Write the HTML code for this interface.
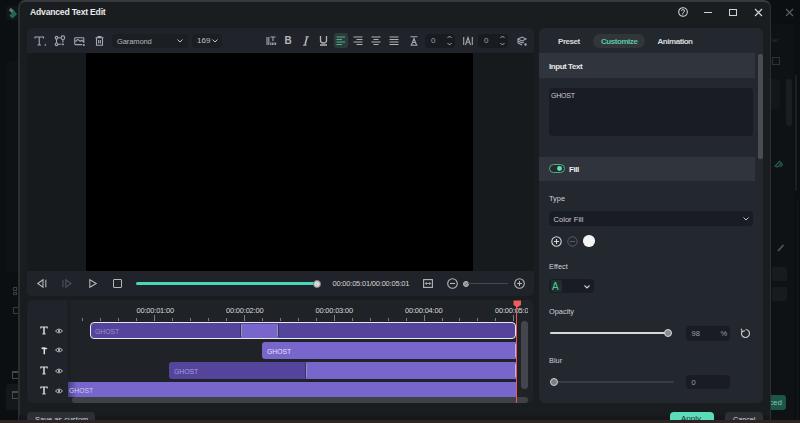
<!DOCTYPE html>
<html><head><meta charset="utf-8">
<style>
*{margin:0;padding:0;box-sizing:border-box}
html,body{width:800px;height:423px;overflow:hidden;background:#0c0f12;font-family:"Liberation Sans",sans-serif;color:#e8e8e8}
.a{position:absolute}
svg{overflow:visible}
#dlg{left:18px;top:0px;width:753px;height:431px;background:#1a1d20;border:1px solid #2c2f34;border-left:2px solid #2b2e32;border-top:2px solid #363a3e;border-radius:7px 7px 0 0}
.title{left:30px;top:7px;font-size:8.6px;font-weight:bold;letter-spacing:-0.2px;color:#eaeaea;white-space:nowrap}
.tb{left:27px;top:28px;width:507px;height:25px;background:#202329;border-radius:5px 5px 0 0}
.prev{left:27px;top:53px;width:507px;height:218px;background:#171a1d}
.vid{left:86px;top:53px;width:387px;height:217.5px;background:#000}
.pb{left:27px;top:270.5px;width:507px;height:25.5px;background:#202329;border-radius:0 0 5px 5px}
.tl{left:27px;top:300px;width:506px;height:102.5px;background:#1f2328;border-radius:5px}
.rp{left:539px;top:28px;width:224px;height:374.5px;background:#23272e;border-radius:6px}
.band{background:#30343c}
.lbl{font-size:8px;color:#d8d8d8;white-space:nowrap}
.bold{font-weight:bold;letter-spacing:-0.45px}
.inp{background:#181b20;border-radius:4px}
.clip{border-radius:3px}
.dk{background:#55449b}
.lt{background:#7866cc}
.ghost{font-size:8px;color:#a89ede;white-space:nowrap;transform:scaleX(0.85);transform-origin:0 0;margin-top:0.7px}
.btm{left:0;top:420px;width:800px;height:3px;background:#2c2622}
.ic{stroke:#a4a8ae;fill:none;stroke-width:1.1}
.tick{position:absolute;width:1px;background:#7a7d82}
.rl{font-size:7.5px;color:#d6d8db;white-space:nowrap;letter-spacing:-0.2px}
</style></head><body>
<!-- background app -->
<div class="a" style="left:771px;top:24px;width:23px;height:396px;background:#0f1215"></div>
<div class="a" style="left:794.5px;top:75px;width:2.5px;height:116px;background:#1c2024;border-radius:1px"></div>
<div class="a" style="left:766px;top:79px;width:14px;height:30px;background:#14171a;border-radius:3px"></div>
<div class="a" style="left:786px;top:79px;width:5.5px;height:47px;background:#1a1e21;border-radius:3px"></div>
<div class="a" style="left:772px;top:57px;width:8px;height:8px;border:1px solid #2e3236"></div>
<div class="a" style="left:772px;top:37px;font:6px 'Liberation Sans';color:#2e3236">ler</div>
<svg class="a" style="left:773.5px;top:158.5px" width="12" height="9" viewBox="0 0 12 9"><path d="M1.2 7 L5.5 2.5 L7.5 4.3 L3.5 8 Z M6 8 L9 5" stroke="#26574b" fill="none" stroke-width="1.3"/></svg>
<svg class="a" style="left:776.5px;top:242.5px" width="8" height="9"><path d="M1 8 L6.5 2" stroke="#55595d" stroke-width="1.6"/></svg>
<div class="a" style="left:772px;top:267px;width:15px;height:14px;background:#181b1e;border-radius:2px"></div>
<div class="a" style="left:772px;top:287px;width:15px;height:14px;background:#181b1e;border-radius:2px"></div>
<div class="a" style="left:797px;top:200px;width:1px;height:220px;background:#171a1d"></div>

<div class="a" style="left:6px;top:61px;width:14px;height:211px;background:#0f1215;border-radius:3px"></div>
<div class="a" style="left:6px;top:384px;width:14px;height:26px;background:#15181b;border-radius:3px"></div>
<div class="a" style="left:13px;top:287px;width:4px;height:3.5px;border:1px solid #3b3f43"></div><div class="a" style="left:13px;top:291.5px;width:4px;height:3.5px;border:1px solid #3b3f43"></div>
<div class="a" style="left:12.5px;top:307px;width:6px;height:7px;border:1px solid #373b3f"></div>
<div class="a" style="left:12px;top:371px;width:7px;height:8px;border:1.2px solid #45494d;border-top-width:2.5px"></div>
<div class="a" style="left:12px;top:391px;width:7px;height:8px;border:1.2px solid #45494d;border-top-width:2.5px"></div>
<div class="a" style="left:6px;top:6px;width:12px;height:14px;background:#0e1819;border-radius:2px"></div><svg class="a" style="left:6px;top:6px" width="12" height="14" viewBox="0 0 12 14"><path d="M4.5 1.8 L8 4.6 L6 7 L3 4.4 Z" fill="#647a74"/><path d="M6 7 L8 4.6 L11 8.2 L6.5 12.5 L3.2 9.8 Z" fill="#266554"/></svg>
<svg class="a" style="left:786px;top:9px" width="8" height="7"><path d="M0 0 L7 7 M7 0 L0 7" stroke="#5d6166" stroke-width="1.1"/></svg>
<div class="a" style="left:760px;top:395px;width:26px;height:15px;background:#1d5646;border-radius:3px"></div><div class="a" style="left:769px;top:398px;font:8px 'Liberation Sans';color:#7fc9b0">ced</div>
<!-- dialog -->
<div id="dlg" class="a"></div>
<div class="a title">Advanced Text Edit</div>
<!-- window controls -->
<svg class="a" style="left:677.7px;top:7.1px" width="10" height="10" viewBox="0 0 10 10"><circle cx="5" cy="5" r="4.3" stroke="#cfd1d4" fill="none" stroke-width="1.1"/><path d="M3.4 3.9 Q3.6 2.6 5.1 2.6 Q6.6 2.7 6.5 4 Q6.3 5 5.2 5.6 Q4.7 6 4.6 7.6" stroke="#cfd1d4" fill="none" stroke-width="1"/></svg>
<div class="a" style="left:704px;top:12px;width:8px;height:1.2px;background:#d0d2d5"></div>
<div class="a" style="left:729px;top:9px;width:8px;height:7px;border:1.1px solid #d0d2d5"></div>
<svg class="a" style="left:755px;top:9px" width="7" height="7"><path d="M0 0 L7 7 M7 0 L0 7" stroke="#d0d2d5" stroke-width="1.2"/></svg>

<!-- toolbar -->
<div class="a tb"></div>
<svg class="a" style="left:34px;top:36px" width="13" height="10" viewBox="0 0 13 10"><path class="ic" d="M1 2.5 V1 H9.5 V2.5 M5.25 1 V9 M3.5 9 H7"/><path d="M10 9.5 L12 7.5 L12 9.5 Z" fill="#a4a8ae"/></svg>
<svg class="a" style="left:54px;top:35px" width="11" height="11" viewBox="0 0 11 11"><path class="ic" d="M3.8 2.7 H6.8 M2.5 4 V8 M3.8 9.3 H7.5 M8.9 5 V7.5"/><circle class="ic" cx="2.5" cy="2.7" r="1.3"/><circle class="ic" cx="8.9" cy="2.7" r="1.8"/><circle class="ic" cx="2.5" cy="9.3" r="1.3"/><rect x="8.1" y="8.5" width="1.7" height="1.7" fill="#a4a8ae"/></svg>
<svg class="a" style="left:74px;top:37px" width="12" height="10" viewBox="0 0 12 10"><path class="ic" d="M9.8 6 V1.5 Q9.8 0.7 9 0.7 H1.5 Q0.7 0.7 0.7 1.5 V6.8 Q0.7 7.6 1.5 7.6 H8.2 M1.5 4.5 L3.8 2.4 L6.2 4.3 L8 3.3 L9.5 4.8"/><circle cx="9.8" cy="8" r="1.1" fill="#a4a8ae"/></svg>
<svg class="a" style="left:95px;top:36px" width="9" height="10" viewBox="0 0 9 10"><path class="ic" d="M0.5 1.8 H8.5 M3 1.8 V0.6 H6 V1.8 M1.5 1.8 V9.2 H7.5 V1.8 M3.6 4 V7.5 M5.4 4 V7.5"/></svg>

<div class="a inp" style="left:112px;top:34px;width:76px;height:14px;background:#1b1e23"></div>
<div class="a lbl" style="left:117px;top:36.5px;color:#b4b7bc;font-size:7.5px;letter-spacing:-0.1px">Garamond</div>
<svg class="a" style="left:177px;top:39px" width="6" height="4"><path d="M0.5 0.5 L3 3 L5.5 0.5" stroke="#c2c4c8" fill="none" stroke-width="1"/></svg>
<div class="a inp" style="left:192px;top:34px;width:30px;height:14px;background:#1b1e23"></div>
<div class="a lbl" style="left:197px;top:36px;color:#c2c4c8;font-size:8px">169</div>
<svg class="a" style="left:212px;top:39px" width="6" height="4"><path d="M0.5 0.5 L3 3 L5.5 0.5" stroke="#c2c4c8" fill="none" stroke-width="1"/></svg>

<!-- text format icons -->
<svg class="a" style="left:266px;top:36px" width="11" height="10" viewBox="0 0 11 10"><path class="ic" d="M1 1 V9 M2.8 1 V9 M4.5 1 H9.5 M7 1 V5 M4.8 6.5 V9 M6.4 6.5 V9 M8 6.5 V9 M9.6 6.5 V9"/></svg>
<div class="a" style="left:284.5px;top:35px;font:bold 10px 'Liberation Sans';color:#b4b7bc">B</div>
<svg class="a" style="left:302px;top:36px" width="8" height="10"><path d="M5 1 L3 9" stroke="#b4b7bc" stroke-width="1.5"/><path d="M3.5 0.8 H7 M1 9.2 H4.5" stroke="#b4b7bc" stroke-width="1"/></svg>
<svg class="a" style="left:319px;top:35px" width="9" height="11"><path d="M1.5 1 V5.5 Q1.5 8 4.5 8 Q7.5 8 7.5 5.5 V1 M1 10 H8" stroke="#b4b7bc" fill="none" stroke-width="1.3"/></svg>
<div class="a" style="left:334px;top:33px;width:14px;height:15px;background:#2d3b39;border-radius:3px"></div>
<svg class="a" style="left:336px;top:36px" width="10" height="10"><path d="M0.5 1 H9 M0.5 3.5 H6 M0.5 6 H9 M0.5 8.5 H6" stroke="#4fae91" stroke-width="1.2"/></svg>
<svg class="a" style="left:353px;top:36px" width="10" height="10"><path d="M0.5 1 H9.5 M3.5 3.5 H9.5 M0.5 6 H9.5 M3.5 8.5 H9.5" stroke="#aeb1b6" stroke-width="1.2"/></svg>
<svg class="a" style="left:371px;top:36px" width="10" height="10"><path d="M0.5 1 H9.5 M2.5 3.5 H7.5 M0.5 6 H9.5 M2.5 8.5 H7.5" stroke="#aeb1b6" stroke-width="1.2"/></svg>
<svg class="a" style="left:389px;top:36px" width="10" height="10"><path d="M0.5 1 H9.5 M0.5 3.5 H9.5 M0.5 6 H9.5 M0.5 8.5 H9.5" stroke="#aeb1b6" stroke-width="1.2"/></svg>
<svg class="a" style="left:410px;top:36px" width="8" height="10"><path class="ic" d="M0.5 0.8 H7.5 M0.5 9.2 H7.5 M1.5 9 L4 2.5 L6.5 9 M2.5 6.5 H5.5"/></svg>
<div class="a inp" style="left:424.5px;top:33.5px;width:30.5px;height:14px"></div>
<div class="a lbl" style="left:431px;top:36px;color:#a0a3a8">0</div>
<svg class="a" style="left:447px;top:35px" width="5" height="11"><path d="M0.5 3 L2.5 1 L4.5 3 M0.5 8 L2.5 10 L4.5 8" stroke="#a4a8ae" fill="none" stroke-width="1"/></svg>
<svg class="a" style="left:462.5px;top:36px" width="10" height="10"><path class="ic" d="M0.7 1 V9 M9.3 1 V9 M2.5 9 L5 1.5 L7.5 9 M3.5 6.3 H6.5"/></svg>
<div class="a inp" style="left:477.5px;top:33.5px;width:30.5px;height:14px"></div>
<div class="a lbl" style="left:484px;top:36px;color:#a0a3a8">0</div>
<svg class="a" style="left:500px;top:35px" width="5" height="11"><path d="M0.5 3 L2.5 1 L4.5 3 M0.5 8 L2.5 10 L4.5 8" stroke="#a4a8ae" fill="none" stroke-width="1"/></svg>
<svg class="a" style="left:517px;top:36px" width="10" height="10"><path class="ic" d="M1 3 L5 1 L9 3 L5 5 Z M1 5 L5 7 L7 6 M1 3 V7 L5 9"/><circle cx="8.5" cy="8.5" r="1.2" fill="#a4a8ae"/></svg>

<div class="a prev"></div>
<div class="a vid"></div>

<!-- playback bar -->
<div class="a pb"></div>
<svg class="a" style="left:37px;top:279px" width="10" height="9"><path d="M6 0.8 L0.8 4.5 L6 8.2 Z M8.8 0.8 V8.2" stroke="#b4b7bc" fill="none" stroke-width="1.1"/></svg>
<svg class="a" style="left:62px;top:279px" width="10" height="9"><path d="M3.8 0.8 L9 4.5 L3.8 8.2 Z M1 0.8 V8.2" stroke="#4d5157" fill="none" stroke-width="1.1"/></svg>
<svg class="a" style="left:89px;top:279px" width="8" height="9"><path d="M0.8 0.8 L7.2 4.5 L0.8 8.2 Z" stroke="#b4b7bc" fill="none" stroke-width="1.1"/></svg>
<div class="a" style="left:113px;top:279px;width:9px;height:9px;border:1.1px solid #b4b7bc;border-radius:1px"></div>
<div class="a" style="left:136px;top:282px;width:181px;height:2.6px;background:#44d9b9;border-radius:2px"></div>
<div class="a" style="left:312.5px;top:279.5px;width:8px;height:8px;background:#d4d6d9;border:1.6px solid #7d8085;border-radius:50%"></div>
<div class="a rl" style="left:332.5px;top:279px;color:#d4d6d9">00:00:05:01/00:00:05:01</div>
<svg class="a" style="left:422.5px;top:279px" width="10" height="9"><rect x="0.6" y="0.6" width="8.8" height="7.8" stroke="#b4b7bc" fill="none" stroke-width="1.1"/><path d="M2.3 4.5 H7.7 M3.6 3.2 L2.3 4.5 L3.6 5.8 M6.4 3.2 L7.7 4.5 L6.4 5.8" stroke="#b4b7bc" fill="none" stroke-width="0.9"/></svg>
<svg class="a" style="left:447px;top:278px" width="11" height="11"><circle cx="5.5" cy="5.5" r="4.8" stroke="#b4b7bc" fill="none" stroke-width="1.1"/><path d="M3 5.5 H8" stroke="#b4b7bc" stroke-width="1.1"/></svg>
<div class="a" style="left:462.5px;top:280.5px;width:6px;height:6px;background:#8d9095;border:1px solid #b9bcc0;border-radius:50%"></div>
<div class="a" style="left:468px;top:283px;width:40px;height:1px;background:#45484d"></div>
<svg class="a" style="left:514px;top:278px" width="11" height="11"><circle cx="5.5" cy="5.5" r="4.8" stroke="#b4b7bc" fill="none" stroke-width="1.1"/><path d="M3 5.5 H8 M5.5 3 V8" stroke="#b4b7bc" stroke-width="1.1"/></svg>

<!-- timeline -->
<div class="a tl"></div>
<div class="tick" style="left:82px;top:317.5px;height:3.5px"></div><div class="tick" style="left:100px;top:317.5px;height:3.5px"></div><div class="tick" style="left:118px;top:317.5px;height:3.5px"></div><div class="tick" style="left:136px;top:317.5px;height:3.5px"></div><div class="tick" style="left:154px;top:314.5px;height:6.5px"></div><div class="tick" style="left:172px;top:317.5px;height:3.5px"></div><div class="tick" style="left:190px;top:317.5px;height:3.5px"></div><div class="tick" style="left:208px;top:317.5px;height:3.5px"></div><div class="tick" style="left:226px;top:317.5px;height:3.5px"></div><div class="tick" style="left:244px;top:314.5px;height:6.5px"></div><div class="tick" style="left:262px;top:317.5px;height:3.5px"></div><div class="tick" style="left:280px;top:317.5px;height:3.5px"></div><div class="tick" style="left:298px;top:317.5px;height:3.5px"></div><div class="tick" style="left:316px;top:317.5px;height:3.5px"></div><div class="tick" style="left:334px;top:314.5px;height:6.5px"></div><div class="tick" style="left:352px;top:317.5px;height:3.5px"></div><div class="tick" style="left:370px;top:317.5px;height:3.5px"></div><div class="tick" style="left:388px;top:317.5px;height:3.5px"></div><div class="tick" style="left:406px;top:317.5px;height:3.5px"></div><div class="tick" style="left:424px;top:314.5px;height:6.5px"></div><div class="tick" style="left:442px;top:317.5px;height:3.5px"></div><div class="tick" style="left:459px;top:317.5px;height:3.5px"></div><div class="tick" style="left:477px;top:317.5px;height:3.5px"></div><div class="tick" style="left:495px;top:317.5px;height:3.5px"></div><div class="tick" style="left:513px;top:314.5px;height:6.5px"></div>
<div class="a rl" style="left:136.5px;top:306px">00:00:01:00</div>
<div class="a rl" style="left:226px;top:306px">00:00:02:00</div>
<div class="a rl" style="left:315.5px;top:306px">00:00:03:00</div>
<div class="a rl" style="left:405px;top:306px">00:00:04:00</div>
<div class="a" style="left:495px;top:304px;width:33px;height:12px;overflow:hidden"><div class="rl" style="position:absolute;left:0;top:2px">00:00:05:00</div></div>

<!-- tracks -->
<div class="a clip dk" style="left:90px;top:322px;width:426px;height:17px;border:1.5px solid #e8e6f0;border-radius:4px"></div>
<div class="a lt" style="left:241px;top:323.5px;width:37px;height:14px"></div>
<div class="a" style="left:239.5px;top:324px;width:1.2px;height:13px;background:#3a2f6e"></div><div class="a" style="left:240.7px;top:325px;width:1px;height:11px;background:#9a93b8"></div>
<div class="a" style="left:276.8px;top:325px;width:1px;height:11px;background:#9a93b8"></div><div class="a" style="left:277.8px;top:324px;width:1.2px;height:13px;background:#3a2f6e"></div>
<div class="a ghost" style="left:95px;top:326px;color:#9a8fd0">GHOST</div>

<div class="a clip lt" style="left:262px;top:341.5px;width:255px;height:17.5px;border-radius:3px 0 0 3px"></div><div class="a" style="left:514.5px;top:344px;width:1px;height:13px;background:#b9b2dc"></div>
<div class="a ghost" style="left:267px;top:346px;color:#e4e0f6">GHOST</div>

<div class="a clip dk" style="left:169px;top:361.5px;width:137px;height:17.5px;border-radius:3px 0 0 3px"></div>
<div class="a lt" style="left:306px;top:361.5px;width:211px;height:17.5px"></div><div class="a" style="left:514.5px;top:364px;width:1px;height:13px;background:#b9b2dc"></div>
<div class="a" style="left:304.5px;top:363px;width:1.2px;height:15px;background:#3a2f6e"></div><div class="a" style="left:305.7px;top:364px;width:1px;height:13px;background:#9a93b8"></div>
<div class="a ghost" style="left:174px;top:366px;color:#a89ede">GHOST</div>

<div class="a" style="left:68px;top:381.5px;width:449px;height:15px;background:linear-gradient(90deg,#4a3f86 0px,#7866cc 9px)"></div>
<div class="a ghost" style="left:69px;top:385px;color:#cfc8f2">GHOST</div>

<!-- track header icons -->
<div class="a" style="left:27.5px;top:301px;width:39px;height:101px;background:#20232a;border-radius:5px 0 0 5px"></div><div class="a" style="left:66.5px;top:301px;width:4px;height:80px;background:#1c1f24"></div>
<svg class="a" style="left:40px;top:326.1px" width="8" height="9" viewBox="0 0 8 9"><path d="M0.8 2.4 V1 H7.2 V2.4" stroke="#dfe0e3" fill="none" stroke-width="1.1"/><path d="M4 1 V7.8" stroke="#dfe0e3" stroke-width="1.5"/><path d="M2.4 7.9 H5.6" stroke="#dfe0e3" stroke-width="1.1"/></svg>
<svg class="a" style="left:54.5px;top:327.6px" width="8" height="6" viewBox="0 0 8 6"><path d="M0.5 3 Q4 -0.8 7.5 3 Q4 6.8 0.5 3 Z" stroke="#c9cbce" fill="none" stroke-width="0.9"/><circle cx="4" cy="3" r="0.9" fill="#f0f0f0"/></svg>
<svg class="a" style="left:40px;top:345.9px" width="9" height="9" viewBox="0 0 9 9"><path d="M1.2 2.2 Q1.5 0.9 4 1.2 Q6.5 1.5 7.6 2.4 Q6.5 3.6 4 3.3 Q1.5 3.2 1.2 2.2 Z" fill="#dfe0e3"/><path d="M4.3 3 V8.3" stroke="#dfe0e3" stroke-width="1.5"/></svg>
<svg class="a" style="left:54.5px;top:347.4px" width="8" height="6" viewBox="0 0 8 6"><path d="M0.5 3 Q4 -0.8 7.5 3 Q4 6.8 0.5 3 Z" stroke="#c9cbce" fill="none" stroke-width="0.9"/><circle cx="4" cy="3" r="0.9" fill="#f0f0f0"/></svg>
<svg class="a" style="left:40px;top:366.1px" width="8" height="9" viewBox="0 0 8 9"><path d="M0.8 2.4 V1 H7.2 V2.4" stroke="#dfe0e3" fill="none" stroke-width="1.1"/><path d="M4 1 V7.8" stroke="#dfe0e3" stroke-width="1.5"/><path d="M2.4 7.9 H5.6" stroke="#dfe0e3" stroke-width="1.1"/></svg>
<svg class="a" style="left:54.5px;top:367.6px" width="8" height="6" viewBox="0 0 8 6"><path d="M0.5 3 Q4 -0.8 7.5 3 Q4 6.8 0.5 3 Z" stroke="#c9cbce" fill="none" stroke-width="0.9"/><circle cx="4" cy="3" r="0.9" fill="#f0f0f0"/></svg>
<svg class="a" style="left:40px;top:386.1px" width="8" height="9" viewBox="0 0 8 9"><path d="M0.8 2.4 V1 H7.2 V2.4" stroke="#dfe0e3" fill="none" stroke-width="1.1"/><path d="M4 1 V7.8" stroke="#dfe0e3" stroke-width="1.5"/><path d="M2.4 7.9 H5.6" stroke="#dfe0e3" stroke-width="1.1"/></svg>
<svg class="a" style="left:54.5px;top:387.6px" width="8" height="6" viewBox="0 0 8 6"><path d="M0.5 3 Q4 -0.8 7.5 3 Q4 6.8 0.5 3 Z" stroke="#c9cbce" fill="none" stroke-width="0.9"/><circle cx="4" cy="3" r="0.9" fill="#f0f0f0"/></svg>
<!-- scrollbars -->
<div class="a" style="left:520.5px;top:321px;width:7px;height:68px;background:#43474d;border-radius:4px"></div>
<div class="a" style="left:72px;top:396.5px;width:456px;height:6px;background:#3e4247;border-radius:3px"></div>
<!-- playhead -->
<div class="a" style="left:516px;top:302px;width:1.3px;height:101px;background:#e85a5a"></div>
<svg class="a" style="left:512.5px;top:300px" width="9" height="8"><path d="M0.5 0.5 H8 V5 L4.25 7.5 L0.5 5 Z" fill="#ec5d5d"/></svg>

<!-- right panel -->
<div class="a rp"></div>
<div class="a" style="left:592.5px;top:33.5px;width:52px;height:14.5px;background:#32363b;border-radius:8px"></div>
<div class="a lbl bold" style="left:558px;top:36.5px;color:#d9dadc">Preset</div>
<div class="a lbl bold" style="left:601px;top:36.5px;color:#59c7a3">Customize</div>
<div class="a lbl bold" style="left:657.5px;top:36.5px;color:#d9dadc">Animation</div>

<div class="a band" style="left:539px;top:53px;width:216px;height:25px"></div>
<div class="a lbl bold" style="left:549px;top:61.5px;color:#e6e7e8">Input Text</div>
<div class="a" style="left:758px;top:54px;width:5px;height:105px;background:#4a4e54;border-radius:2px"></div>
<div class="a inp" style="left:549px;top:88px;width:204px;height:48px;background:#191c24"></div>
<div class="a" style="left:551px;top:92px;font:7px 'Liberation Sans';color:#c8cacd;letter-spacing:-0.2px">GHOST</div>

<div class="a band" style="left:538.5px;top:157px;width:216.5px;height:23.5px"></div>
<div class="a" style="left:549px;top:164.3px;width:15.5px;height:8.8px;border:1px solid #5aa58e;border-radius:5px;background:#222c2d"></div>
<div class="a" style="left:557.2px;top:166.4px;width:4.8px;height:4.8px;background:#62dcb5;border-radius:50%"></div>
<div class="a lbl bold" style="left:569px;top:165px;color:#eeeeee">Fill</div>

<div class="a lbl" style="left:549px;top:194.2px;color:#d0d2d5;font-size:7.4px">Type</div>
<div class="a inp" style="left:549px;top:211.3px;width:204px;height:14.5px;background:#191c24"></div>
<div class="a lbl" style="left:553.5px;top:214.5px;color:#c8cacd;font-size:7.6px">Color Fill</div>
<svg class="a" style="left:743px;top:217px" width="6" height="4"><path d="M0.5 0.5 L3 3 L5.5 0.5" stroke="#c2c4c8" fill="none" stroke-width="1"/></svg>
<svg class="a" style="left:551px;top:235.8px" width="11" height="11"><circle cx="5.5" cy="5.5" r="4.7" stroke="#d5d7da" fill="none" stroke-width="1.1"/><path d="M3 5.5 H8 M5.5 3 V8" stroke="#d5d7da" stroke-width="1.1"/></svg>
<svg class="a" style="left:566.5px;top:235.8px" width="11" height="11"><circle cx="5.5" cy="5.5" r="4.7" stroke="#5a5e63" fill="none" stroke-width="1"/><path d="M3 5.5 H8" stroke="#5a5e63" stroke-width="1"/></svg>
<div class="a" style="left:583.2px;top:235.3px;width:11.5px;height:11.5px;background:#f4f4f4;border-radius:50%"></div>

<div class="a lbl" style="left:549px;top:261.8px;color:#d0d2d5;font-size:7.4px">Effect</div>
<div class="a inp" style="left:549px;top:279px;width:45px;height:14px;background:#191c24"></div>
<div class="a" style="left:551px;top:280px;width:11px;height:12px;background:#1f302d;border-radius:2px"></div>
<div class="a" style="left:552px;top:280.5px;font:10px 'Liberation Sans';color:#52c9a3">A</div>
<svg class="a" style="left:583.5px;top:284.5px" width="6" height="4"><path d="M0.5 0.5 L3 3 L5.5 0.5" stroke="#d2d4d7" fill="none" stroke-width="1.1"/></svg>

<div class="a lbl" style="left:549px;top:306.6px;color:#d0d2d5;font-size:7.4px">Opacity</div>
<div class="a" style="left:550px;top:331.5px;width:118px;height:2px;background:#d6d8db;border-radius:1px"></div>
<div class="a" style="left:663.8px;top:328.6px;width:8px;height:8px;background:#8a8e93;border:1.8px solid #d5d8db;border-radius:50%"></div>
<div class="a inp" style="left:685.5px;top:326px;width:44px;height:14.5px;background:#191c24"></div>
<div class="a lbl" style="left:691.5px;top:329px;color:#9c9fa4;font-size:7.5px">98</div>
<div class="a lbl" style="left:720.5px;top:329px;color:#9c9fa4;font-size:7.5px">%</div>
<svg class="a" style="left:739.5px;top:327.5px" width="11" height="11"><path d="M2.2 3.2 A4 4 0 1 0 5.5 1.5" stroke="#c4c6ca" fill="none" stroke-width="1.2"/><path d="M1.2 0.8 L2.3 3.6 L5 2.8" stroke="#c4c6ca" fill="none" stroke-width="1.1"/></svg>

<div class="a lbl" style="left:549px;top:356px;color:#d0d2d5;font-size:7.4px">Blur</div>
<div class="a" style="left:553px;top:381px;width:121px;height:2px;background:#3a3d43;border-radius:1px"></div>
<div class="a" style="left:549.5px;top:377.5px;width:8px;height:8px;background:#7a7e83;border:1.8px solid #cdd0d3;border-radius:50%"></div>
<div class="a inp" style="left:685.5px;top:374.5px;width:44px;height:14.5px;background:#191c24"></div>
<div class="a lbl" style="left:691.5px;top:378px;color:#9c9fa4;font-size:7.5px">0</div>

<!-- bottom buttons -->
<div class="a" style="left:19px;top:415px;width:751px;height:5px;background:linear-gradient(#191a1d,#151619)"></div>
<div class="a" style="left:27px;top:412px;width:68px;height:14px;background:#2c2f34;border-radius:4px"></div>
<div class="a lbl" style="left:35px;top:415px;color:#cfd1d4;font-size:7.5px">Save as custom</div>
<div class="a" style="left:669.5px;top:411.5px;width:44.5px;height:14px;background:#5cdcb9;border-radius:4px"></div>
<div class="a lbl" style="left:681px;top:414px;color:#173a30">Apply</div>
<div class="a" style="left:725px;top:412px;width:37.5px;height:14px;background:#2c2f34;border-radius:4px"></div>
<div class="a lbl" style="left:733px;top:414.5px;color:#d4d6d9;font-size:7.2px">Cancel</div>

<div class="a btm"></div>
</body></html>
